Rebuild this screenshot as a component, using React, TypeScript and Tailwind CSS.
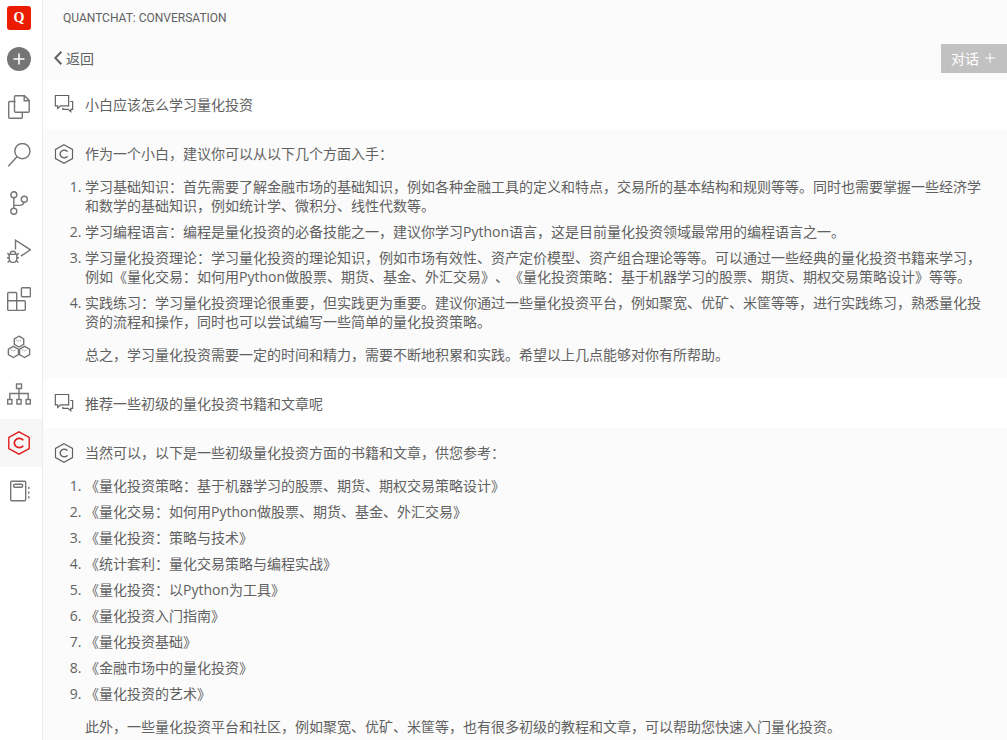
import React from 'react';
import clsx from 'clsx';

interface IconProps {
  className?: string;
}

const Icon: React.FC<{ children: React.ReactNode; className?: string }> = ({ children, className }) => (
  <svg
    viewBox="0 0 24 24"
    fill="none"
    stroke="currentColor"
    strokeWidth="1.4"
    className={clsx('shrink-0', className ?? 'h-6 w-6')}
    aria-hidden="true"
  >
    {children}
  </svg>
);

const FilesIcon = () => (
  <Icon>
    <path d="M8.5 6.5H2.7a1 1 0 0 0-1 1v14.7a1 1 0 0 0 1 1h11.6a1 1 0 0 0 1-1v-4.7" />
    <path d="M9.2.8h8.3l4.7 4.6v10.9a1 1 0 0 1-1 1H8.5a1 1 0 0 1-1-1V1.8a1 1 0 0 1 1-1z" />
    <path d="M17.2 1v4.7H22" />
  </Icon>
);

const SearchIcon = () => (
  <Icon>
    <circle cx="15.4" cy="8.1" r="7.6" />
    <path d="M10 13.7 1.3 23.2" />
  </Icon>
);

const BranchIcon = () => (
  <Icon>
    <circle cx="6.8" cy="3.8" r="3" />
    <circle cx="6.8" cy="20.2" r="3" />
    <circle cx="17.3" cy="8.2" r="3" />
    <path d="M6.8 6.8v10.4M6.8 14.4h5.4q4.2 0 4.8-3.2" />
  </Icon>
);

const DebugIcon = () => (
  <Icon>
    <path d="M8.5 10.5V1.2l15 9.6-9.6 6.3" />
    <path d="M2.2 15.4h7.6v4.3a3.8 3.8 0 0 1-7.6 0zM3.2 15.2a2.8 3 0 0 1 5.6 0" />
    <path d="M2.2 16.2.4 14M9.8 16.2l1.8-2.2M2.2 18.8H0M9.8 18.8H12M3 21.3l-2.4 2.3M9 21.3l2.4 2.3" />
  </Icon>
);

const ExtensionsIcon = () => (
  <Icon>
    <path d="M.7 6.5a1 1 0 0 1 1-1h7a1 1 0 0 1 1 1v7.3h7.6a1 1 0 0 1 1 1v7.6a1 1 0 0 1-1 1H1.7a1 1 0 0 1-1-1zM.7 13.8h9M9.7 13.8v9.6" />
    <rect x="14.4" y=".8" width="9" height="9" rx="1" />
  </Icon>
);

const ClusterIcon = () => (
  <Icon>
    <path d="M12 1.2l4.7 2.7v5.4L12 12 7.3 9.3V3.9zM6.4 11.3l5 2.8v5.6l-5 2.8-5-2.8v-5.6zM17.6 11.3l5 2.8v5.6l-5 2.8-5-2.8v-5.6z" />
    <path d="M9.3 4.9 12 6.2l2.7-1.3M3.7 14.8l2.7 1.2 2.7-1.2M14.9 14.8l2.7 1.2 2.7-1.2" strokeWidth=".8" strokeDasharray="1.2 .8" />
  </Icon>
);

const TreeIcon = () => (
  <Icon>
    <rect x="9.5" y="1" width="5" height="4.5" />
    <rect x=".7" y="16.5" width="4.2" height="4.5" />
    <rect x="9.9" y="16.5" width="4.2" height="4.5" />
    <rect x="19.1" y="16.5" width="4.2" height="4.5" />
    <path d="M12 5.5v11M2.8 16.5v-6h18.4v6" />
  </Icon>
);

const HexagonIcon: React.FC<IconProps> = ({ className }) => (
  <Icon className={className}>
    <path d="M12 .8l10.2 5.7v11L12 23.2 1.8 17.5v-11z" />
    <path d="M16.3 9.2a5 4.6 0 1 0 0 5.6" strokeWidth="1.7" />
  </Icon>
);

const NotebookIcon = () => (
  <Icon>
    <rect x="3.7" y="2.2" width="15" height="19.5" rx="1" />
    <rect x="6.5" y="5.2" width="9.2" height="3" rx="1.5" />
    <path d="M21.8 7.8V10M21.8 12.5v2.2M21.8 17.2v2.2" />
  </Icon>
);

const ChatIcon: React.FC<IconProps> = ({ className }) => (
  <Icon className={className}>
    <path d="M1.6 1.8h16v12.4H8l-3.6 3.2v-3.2H1.6z" />
    <path d="M19.6 9h2.8v9.4h-2.2v2.8l-3.4-2.8h-6.2v-2" />
  </Icon>
);

const navItems = [
  { label: '资源管理器', icon: FilesIcon },
  { label: '搜索', icon: SearchIcon },
  { label: '源代码管理', icon: BranchIcon },
  { label: '运行和调试', icon: DebugIcon },
  { label: '扩展', icon: ExtensionsIcon },
  { label: '集群', icon: ClusterIcon },
  { label: '结构', icon: TreeIcon },
  { label: 'QuantChat', icon: HexagonIcon, active: true },
  { label: '笔记', icon: NotebookIcon },
];

interface Message {
  question: string;
  intro: string;
  items: string[];
  outro: string;
}

const messages: Message[] = [
  {
    question: '小白应该怎么学习量化投资',
    intro: '作为一个小白，建议你可以从以下几个方面入手：',
    items: [
      '学习基础知识：首先需要了解金融市场的基础知识，例如各种金融工具的定义和特点，交易所的基本结构和规则等等。同时也需要掌握一些经济学和数学的基础知识，例如统计学、微积分、线性代数等。',
      '学习编程语言：编程是量化投资的必备技能之一，建议你学习Python语言，这是目前量化投资领域最常用的编程语言之一。',
      '学习量化投资理论：学习量化投资的理论知识，例如市场有效性、资产定价模型、资产组合理论等等。可以通过一些经典的量化投资书籍来学习，例如《量化交易：如何用Python做股票、期货、基金、外汇交易》、《量化投资策略：基于机器学习的股票、期货、期权交易策略设计》等等。',
      '实践练习：学习量化投资理论很重要，但实践更为重要。建议你通过一些量化投资平台，例如聚宽、优矿、米筐等等，进行实践练习，熟悉量化投资的流程和操作，同时也可以尝试编写一些简单的量化投资策略。',
    ],
    outro: '总之，学习量化投资需要一定的时间和精力，需要不断地积累和实践。希望以上几点能够对你有所帮助。',
  },
  {
    question: '推荐一些初级的量化投资书籍和文章呢',
    intro: '当然可以，以下是一些初级量化投资方面的书籍和文章，供您参考：',
    items: [
      '《量化投资策略：基于机器学习的股票、期货、期权交易策略设计》',
      '《量化交易：如何用Python做股票、期货、基金、外汇交易》',
      '《量化投资：策略与技术》',
      '《统计套利：量化交易策略与编程实战》',
      '《量化投资：以Python为工具》',
      '《量化投资入门指南》',
      '《量化投资基础》',
      '《金融市场中的量化投资》',
      '《量化投资的艺术》',
    ],
    outro: '此外，一些量化投资平台和社区，例如聚宽、优矿、米筐等，也有很多初级的教程和文章，可以帮助您快速入门量化投资。',
  },
];

const Sidebar = () => (
  <nav className="flex w-[43px] shrink-0 flex-col border-r border-[#ececec] bg-white text-[#757575]">
    <div className="flex h-[35px] items-center pl-[7px]">
      <div className="flex h-6 w-6 items-center justify-center rounded-[3px] bg-[#eb1c00] font-['Liberation_Serif',serif] text-[14px] font-bold text-white">
        Q
      </div>
    </div>
    <button type="button" aria-label="新建" className="flex h-12 items-center pl-[7px]">
      <span className="flex h-6 w-6 items-center justify-center rounded-full bg-[#757575] text-white">
        <svg viewBox="0 0 12 12" className="h-3 w-3" stroke="currentColor" strokeWidth="1.6" aria-hidden="true">
          <path d="M6 .5v11M.5 6h11" />
        </svg>
      </span>
    </button>
    {navItems.map(({ label, icon: NavIcon, active }) => (
      <button
        key={label}
        type="button"
        aria-label={label}
        className={clsx('flex h-12 items-center pl-[7px]', active && 'bg-[#f7f7f7] text-[#e01b1b]')}
      >
        <NavIcon />
      </button>
    ))}
  </nav>
);

const Conversation: React.FC<{ message: Message }> = ({ message }) => (
  <>
    <section className="flex gap-[11px] bg-white py-[15px] pr-6 pl-[11px]">
      <ChatIcon className="-mt-px h-5 w-5" />
      <p>{message.question}</p>
    </section>
    <section className="flex gap-[11px] py-[15px] pr-6 pl-[11px]">
      <HexagonIcon className="h-5 w-5" />
      <div className="flex min-w-0 flex-1 flex-col gap-[14px]">
        <p>{message.intro}</p>
        <ol className="flex list-decimal flex-col gap-[7px]">
          {message.items.map((item) => (
            <li key={item}>{item}</li>
          ))}
        </ol>
        <p>{message.outro}</p>
      </div>
    </section>
  </>
);

export default function App() {
  return (
    <div
      lang="zh-CN"
      className="flex h-screen bg-[#fbfbfb] font-['Open_Sans','Noto_Sans_CJK_SC',sans-serif] text-[14px] leading-[19px] text-[#616161] [text-spacing-trim:space-all]"
    >
      <Sidebar />
      <main className="flex min-w-0 flex-1 flex-col">
        <h1 className="flex h-9 shrink-0 items-center pl-5 font-['Roboto',sans-serif] text-[12px] font-normal">
          QUANTCHAT: CONVERSATION
        </h1>
        <div className="flex h-11 shrink-0 items-center justify-between">
          <a href="#" className="flex items-center gap-1 pl-[11px]">
            <svg viewBox="0 0 8 14" className="h-[14px] w-2" fill="none" stroke="currentColor" strokeWidth="2" aria-hidden="true">
              <path d="M7.3.8 1.3 7l6 6.2" />
            </svg>
            返回
          </a>
          <button type="button" className="flex h-[29px] items-center gap-[6px] bg-[#c1c1c1] pr-3 pl-[10px] text-white">
            对话
            <svg viewBox="0 0 10 10" className="h-[10px] w-[10px]" stroke="currentColor" strokeWidth="1" aria-hidden="true">
              <path d="M5 0v10M0 5h10" />
            </svg>
          </button>
        </div>
        <div className="min-h-0 flex-1 overflow-y-auto [scrollbar-width:none]">
          {messages.map((message) => (
            <Conversation key={message.question} message={message} />
          ))}
        </div>
      </main>
    </div>
  );
}
